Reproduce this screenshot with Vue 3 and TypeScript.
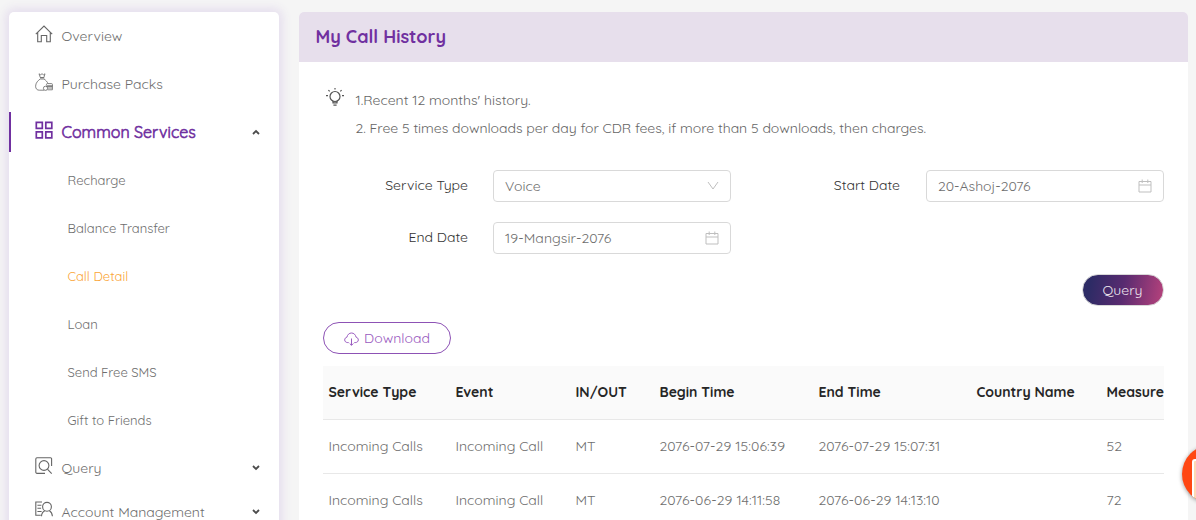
<script setup lang="ts">
interface SubItem { text: string; active?: boolean }

const subItems: SubItem[] = [
  { text: 'Recharge' },
  { text: 'Balance Transfer' },
  { text: 'Call Detail', active: true },
  { text: 'Loan' },
  { text: 'Send Free SMS' },
  { text: 'Gift to Friends' },
]

const columns: string[] = ['Service Type', 'Event', 'IN/OUT', 'Begin Time', 'End Time', 'Country Name', 'Measure']

const rows: string[][] = [
  ['Incoming Calls', 'Incoming Call', 'MT', '2076-07-29 15:06:39', '2076-07-29 15:07:31', '', '52'],
  ['Incoming Calls', 'Incoming Call', 'MT', '2076-06-29 14:11:58', '2076-06-29 14:13:10', '', '72'],
]
</script>

<template>
  <div class="page">
    <aside class="sidebar">
      <div class="item">
        <svg class="ico" viewBox="0 0 18 18"><path d="M.8 9.2 9 1l8.2 8.2M2.7 7.5v9.3h3.6v-6.3h5.4v6.3h3.6V7.5" /></svg>
        <span>Overview</span>
      </div>
      <div class="item">
        <svg class="ico thin" viewBox="0 0 18 18">
          <path d="M4 .8l1.7 1L7 .7l1.4 1.1L10 .8 8.9 4.500H5.300zM5 4.800h4.200M5.200 6h4M5.200 6C3.200 7.400.6 9.800.6 13.200c0 2.700 1.600 4 3.700 4H9M9 6c1.800 1.200 3.200 2.800 4 4.500" />
          <rect x="11.5" y="10.6" width="5.9" height="2.1" rx=".8" /><path d="M11.5 13.5h5.9M12.5 15h4.900M12.5 16.800h4.900V12" />
          <circle cx="10.5" cy="15.3" r="2.1" />
        </svg>
        <span>Purchase Packs</span>
      </div>
      <div class="item open">
        <svg class="ico" viewBox="0 0 18 18"><path d="M1.3 1.3h6v6h-6zM10.8 1.3h6v6h-6zM1.3 10.8h6v6h-6zM10.8 10.8h6v6h-6z" /></svg>
        <span>Common Services</span>
        <svg class="chev" viewBox="0 0 8 6"><path d="M1 5l3-3 3 3" /></svg>
      </div>
      <div v-for="s in subItems" :key="s.text" class="item sub" :class="{ active: s.active }">
        <span>{{ s.text }}</span>
      </div>
      <div class="item query-item">
        <svg class="ico" viewBox="0 0 18 18"><path d="M10 16.4H2A1.3 1.3 0 0 1 .8 15V2A1.3 1.3 0 0 1 2 .8h13.6a1 1 0 0 1 1 1V9M12.4 12.2l4.3 4.5" /><circle cx="9" cy="8.5" r="4.9" /></svg>
        <span>Query</span>
        <svg class="chev" viewBox="0 0 8 6"><path d="M1 1l3 3 3-3" /></svg>
      </div>
      <div class="item">
        <svg class="ico" viewBox="0 0 18 18"><path d="M7 1H.8v13.2h5M2.4 4.2h4M2.4 7.3h3.7M2.4 10.5h4.2M6.5 15.2c.1-2.7 1.5-4.5 3.4-5.4M14.4 9.8c1.8 1 2.8 2.8 3 5.4" /><circle cx="12" cy="5.8" r="4.4" /></svg>
        <span>Account Management</span>
        <svg class="chev" viewBox="0 0 8 6"><path d="M1 1l3 3 3-3" /></svg>
      </div>
    </aside>

    <main class="panel">
      <header class="title">My Call History</header>
      <div class="body">
        <div class="notes">
          <svg class="bulb" viewBox="0 0 18 18"><circle cx="9" cy="8.500" r="5" /><path d="M7 13.1v1.7h4v-1.7M7.4 17.2h3.2M9 0v1.5M2.4 2.1l1.3 1.3M15.6 2.1l-1.3 1.3M0 7.6h2M16 7.6h2" /></svg>
          <div>
            <p>1.Recent 12 months' history.</p>
            <p class="limit">2. Free 5 times downloads per day for CDR fees, if more than 5 downloads, then charges.</p>
          </div>
        </div>

        <div class="form">
          <div class="label">Service Type</div>
          <div class="field">
            <span>Voice</span>
            <svg class="down" viewBox="0 0 12 12"><path d="M1 2l5 7 5-7" /></svg>
          </div>
          <div class="label start">Start Date</div>
          <div class="field">
            <span>20-Ashoj-2076</span>
            <svg class="cal" viewBox="0 0 14 14"><path d="M1 2.5h12v10.500H1zM1 6h12M4.200.5v3.500M9.800.5v3.500" /></svg>
          </div>
          <div class="label">End Date</div>
          <div class="field">
            <span class="mangsir">19-Mangsir-2076</span>
            <svg class="cal" viewBox="0 0 14 14"><path d="M1 2.5h12v10.500H1zM1 6h12M4.200.5v3.500M9.800.5v3.500" /></svg>
          </div>
        </div>

        <div class="actions"><button class="query">Query</button></div>

        <button class="download">
          <svg viewBox="0 0 15 14"><path d="M4.700 10.600H3.800C1.900 10.600.7 9.400.7 7.900c0-1.400.9-2.400 2.200-2.700C3.500 2.600 5.200 1 7.500 1s4 1.600 4.600 4.200c1.300.3 2.200 1.300 2.200 2.700 0 1.500-1.200 2.700-3.100 2.700h-.9M7.500 6.500v6.700M5.700 11.500l1.800 1.800 1.800-1.800" /></svg>
          <span>Download</span>
        </button>

        <div class="table">
          <div class="row head">
            <div v-for="c in columns" :key="c">{{ c }}</div>
          </div>
          <div v-for="(r, i) in rows" :key="i" class="row">
            <div v-for="(c, j) in r" :key="j" :class="{ time: j === 3 || j === 4 }">{{ c }}</div>
          </div>
        </div>
      </div>
    </main>

    <div class="chat"><i></i></div>
  </div>
</template>

<style>
body { margin: 0; overflow: hidden; }
</style>

<style scoped>
* { box-sizing: border-box; }
.page {
  position: relative;
  display: flex;
  gap: 20px;
  width: 1196px;
  height: 520px;
  padding: 12px 8px 0 9px;
  overflow: hidden;
  background: #f5f5f5;
  color: #6e6e6e;
  font: 14px/20px Quicksand, Lato, "Open Sans", sans-serif;
  white-space: nowrap;
}
svg { fill: none; stroke: currentColor; flex: none; }
.sidebar {
  width: 270px;
  height: 560px;
  padding-top: 4px;
  background: #fff;
  border-radius: 5px;
  box-shadow: 0 0 10px 4px #e6dfee;
}
.item {
  display: flex;
  align-items: center;
  height: 40px;
  margin-bottom: 8px;
  padding: 0 19px 0 25.5px;
}
.query-item { margin-bottom: 4px; }
.ico { width: 18px; height: 18px; margin: -4px 9px 0 0; stroke-width: 1.1; color: #666; }
.ico.thin { stroke-width: .8; }
.open { padding-left: 23.5px; border-left: 2px solid #7030a0; color: #7030a0; font-size: 16px; font-weight: 400; }
.open .ico { color: #7030a0; stroke-width: 1.7; }
.open > span { -webkit-text-stroke: .6px #7030a0; }
.chev { width: 8px; height: 6px; margin-left: auto; color: #4c4c4c; stroke-width: 1.8; }
.sub { padding-left: 58.5px; font-size: 13px; }
.active { color: #faa537; }
.panel { width: 889px; height: 560px; background: #fff; border-radius: 5px; overflow: hidden; }
.title {
  display: flex;
  align-items: center;
  height: 50px;
  padding-left: 16.5px;
  background: #e7dfec;
  color: #7030a0;
  font-size: 18px;
  font-weight: 700;
}
.body { padding: 24px 24px 0; }
.notes { display: flex; height: 84px; padding-left: 2.5px; color: #666; }
.bulb { width: 18px; height: 18px; margin: 2px 12px 0 0; color: #555; stroke-width: 1.2; }
.notes p { margin: 0; height: 28px; line-height: 28px; }
.notes .limit { letter-spacing: -.02px; }
.form {
  display: grid;
  grid-template-columns: 145px 263px 170px 263px;
  row-gap: 20px;
  width: 841px;
}
.label { height: 32px; line-height: 31px; text-align: right; color: #333; }
.start { padding-right: 1px; }
.field {
  display: flex;
  align-items: center;
  justify-content: space-between;
  width: 238px;
  height: 32px;
  margin-left: 25px;
  padding: 0 11px;
  border: 1px solid #d9d9d9;
  border-radius: 4px;
}
.mangsir { letter-spacing: .08px; }
.down { width: 12px; height: 12px; color: #bfbfbf; }
.cal { width: 14px; height: 14px; color: #bfbfbf; }
.actions { display: flex; justify-content: flex-end; padding-top: 20px; height: 68px; }
button { display: flex; align-items: center; justify-content: center; font: inherit; }
.query {
  width: 82px;
  height: 32px;
  padding: 0 7px 0 6px;
  border: 1px solid #d9d9d9;
  border-radius: 16px;
  background: linear-gradient(100deg, #2d2b65 10%, #592b70 50%, #b7427c 100%);
  color: #eee6ee;
}
.download {
  gap: 5px;
  width: 128px;
  height: 32px;
  border: 1px solid #8d52b5;
  border-radius: 16px;
  background: #fff;
  color: #9a5bc0;
}
.download svg { width: 15px; height: 14px; margin-top: 2px; }
.table { width: 841px; margin-top: 12px; overflow: hidden; }
.row {
  display: grid;
  grid-template-columns: 127px 120px 84px 159px 158px 130px 90px;
  align-items: center;
  width: 868px;
  height: 54px;
  padding: 0 0 1px 5.5px;
  border-bottom: 1px solid #e8e8e8;
}
.time { letter-spacing: .1px; }
.head { background: #fafafa; color: #262626; font-weight: 700; }
.chat {
  position: absolute;
  left: 1182px;
  top: 445px;
  width: 58px;
  height: 58px;
  border-radius: 50%;
  overflow: hidden;
  background: #ff4713;
  box-shadow: 0 1px 4px rgba(0, 0, 0, .4);
}
.chat i { position: absolute; left: 10px; top: 14px; width: 34px; height: 44px; border: 2px solid #fff; border-radius: 3px; background: #fdd9b5; }
</style>
